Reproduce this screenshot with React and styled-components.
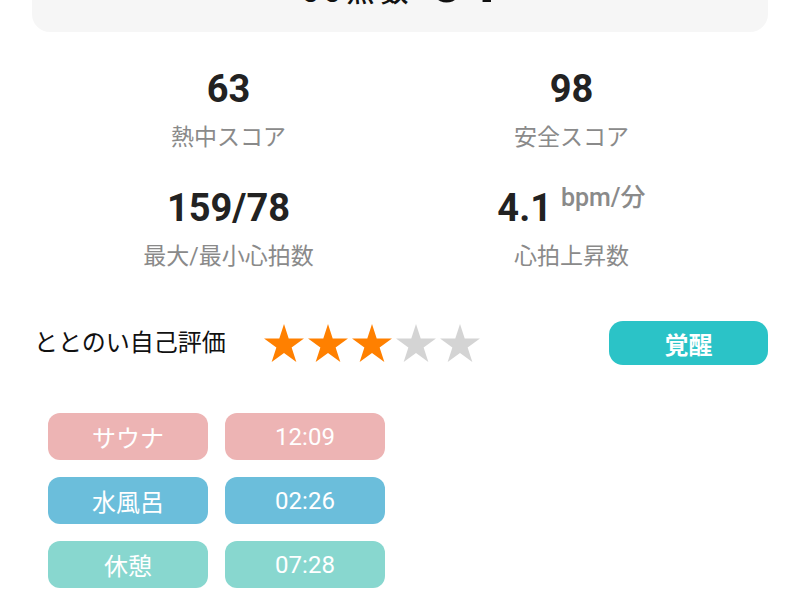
import React from "react";
import styled, { createGlobalStyle } from "styled-components";

const GlobalStyle = createGlobalStyle`
  html, body { margin: 0; padding: 0; background: #ffffff; }
  body {
    font-family: Roboto, "Noto Sans CJK JP", "Noto Sans", sans-serif;
    overflow: hidden;
  }
`;

const Page = styled.div`
  width: 800px;
  height: 600px;
  box-sizing: border-box;
  padding: 0 32px;
  display: flex;
  flex-direction: column;
  overflow: hidden;
`;

const TopCard = styled.div`
  margin-top: -70px;
  padding: 22px 0 19px;
  background: #f6f6f6;
  border-radius: 0 0 18px 18px;
  display: flex;
  justify-content: center;
  align-items: baseline;
  gap: 14px;
  color: #111;
`;

const TopLabel = styled.span`
  font-size: 28px;
  line-height: 40px;
  font-weight: 500;
  letter-spacing: 6px;
`;

const TopValue = styled.span`
  font-size: 60px;
  line-height: 60px;
  font-weight: 700;
`;

const StatsGrid = styled.div`
  margin-top: 33px;
  padding: 0 25px;
  display: grid;
  grid-template-columns: 1fr 1fr;
  row-gap: 30px;
`;

const Stat = styled.div`
  display: flex;
  flex-direction: column;
  align-items: center;
  gap: 9px;
`;

const Value = styled.div`
  display: flex;
  align-items: flex-start;
  font-size: 38px;
  line-height: 48px;
  font-weight: 700;
  color: #222;
`;

const Unit = styled.span`
  margin-left: 9px;
  margin-top: -6px;
  font-size: 25px;
  line-height: 40px;
  font-weight: 500;
  color: #8a8a8a;
`;

const Label = styled.div`
  font-size: 23px;
  line-height: 32px;
  color: #8a8a8a;
`;

const RatingRow = styled.div`
  margin-top: 48px;
  display: flex;
  align-items: center;
  height: 44px;
`;

const RatingLabel = styled.div`
  padding-left: 2px;
  font-size: 24px;
  line-height: 32px;
  color: #111;
`;

const Stars = styled.div`
  margin-left: 38px;
  display: flex;
  gap: 4px;
`;

const StarSvg = styled.svg`
  width: 40px;
  height: 38px;
  display: block;
  fill: ${(p) => (p.$on ? "#ff8000" : "#d4d4d4")};
`;

const ModeButton = styled.div`
  margin-left: auto;
  width: 159px;
  height: 44px;
  border-radius: 14px;
  background: #2bc3c7;
  color: #fff;
  font-size: 24px;
  font-weight: 700;
  display: flex;
  align-items: center;
  justify-content: center;
`;

const PillGrid = styled.div`
  margin-top: 48px;
  margin-left: 16px;
  display: grid;
  grid-template-columns: 160px 160px;
  column-gap: 17px;
  row-gap: 17px;
`;

const Pill = styled.div`
  height: 47px;
  border-radius: 12px;
  background: ${(p) => p.$color};
  color: #fff;
  font-size: 24px;
  display: flex;
  align-items: center;
  justify-content: center;
`;

const Star = ({ on }) => (
  <StarSvg $on={on} viewBox="0 0 40 38">
    <polygon points="20,0 24.71,14.51 39.97,14.51 27.63,23.48 32.34,38 20,29.02 7.66,38 12.37,23.48 0.03,14.51 15.29,14.51" />
  </StarSvg>
);

const stats = [
  { value: "63", label: "熱中スコア" },
  { value: "98", label: "安全スコア" },
  { value: "159/78", label: "最大/最小心拍数" },
  { value: "4.1", unit: "bpm/分", label: "心拍上昇数" },
];

const sessions = [
  { name: "サウナ", time: "12:09", color: "#edb4b4" },
  { name: "水風呂", time: "02:26", color: "#6bbedb" },
  { name: "休憩", time: "07:28", color: "#88d7cf" },
];

export default function App() {
  return (
    <>
      <GlobalStyle />
      <Page>
        <TopCard>
          <TopLabel>33点数</TopLabel>
          <TopValue>64</TopValue>
        </TopCard>
        <StatsGrid>
          {stats.map((s) => (
            <Stat key={s.label}>
              <Value>
                {s.value}
                {s.unit && <Unit>{s.unit}</Unit>}
              </Value>
              <Label>{s.label}</Label>
            </Stat>
          ))}
        </StatsGrid>
        <RatingRow>
          <RatingLabel>ととのい自己評価</RatingLabel>
          <Stars>
            {[1, 2, 3, 4, 5].map((i) => (
              <Star key={i} on={i <= 3} />
            ))}
          </Stars>
          <ModeButton>覚醒</ModeButton>
        </RatingRow>
        <PillGrid>
          {sessions.map((s) => (
            <React.Fragment key={s.name}>
              <Pill $color={s.color}>{s.name}</Pill>
              <Pill $color={s.color}>{s.time}</Pill>
            </React.Fragment>
          ))}
        </PillGrid>
      </Page>
    </>
  );
}
